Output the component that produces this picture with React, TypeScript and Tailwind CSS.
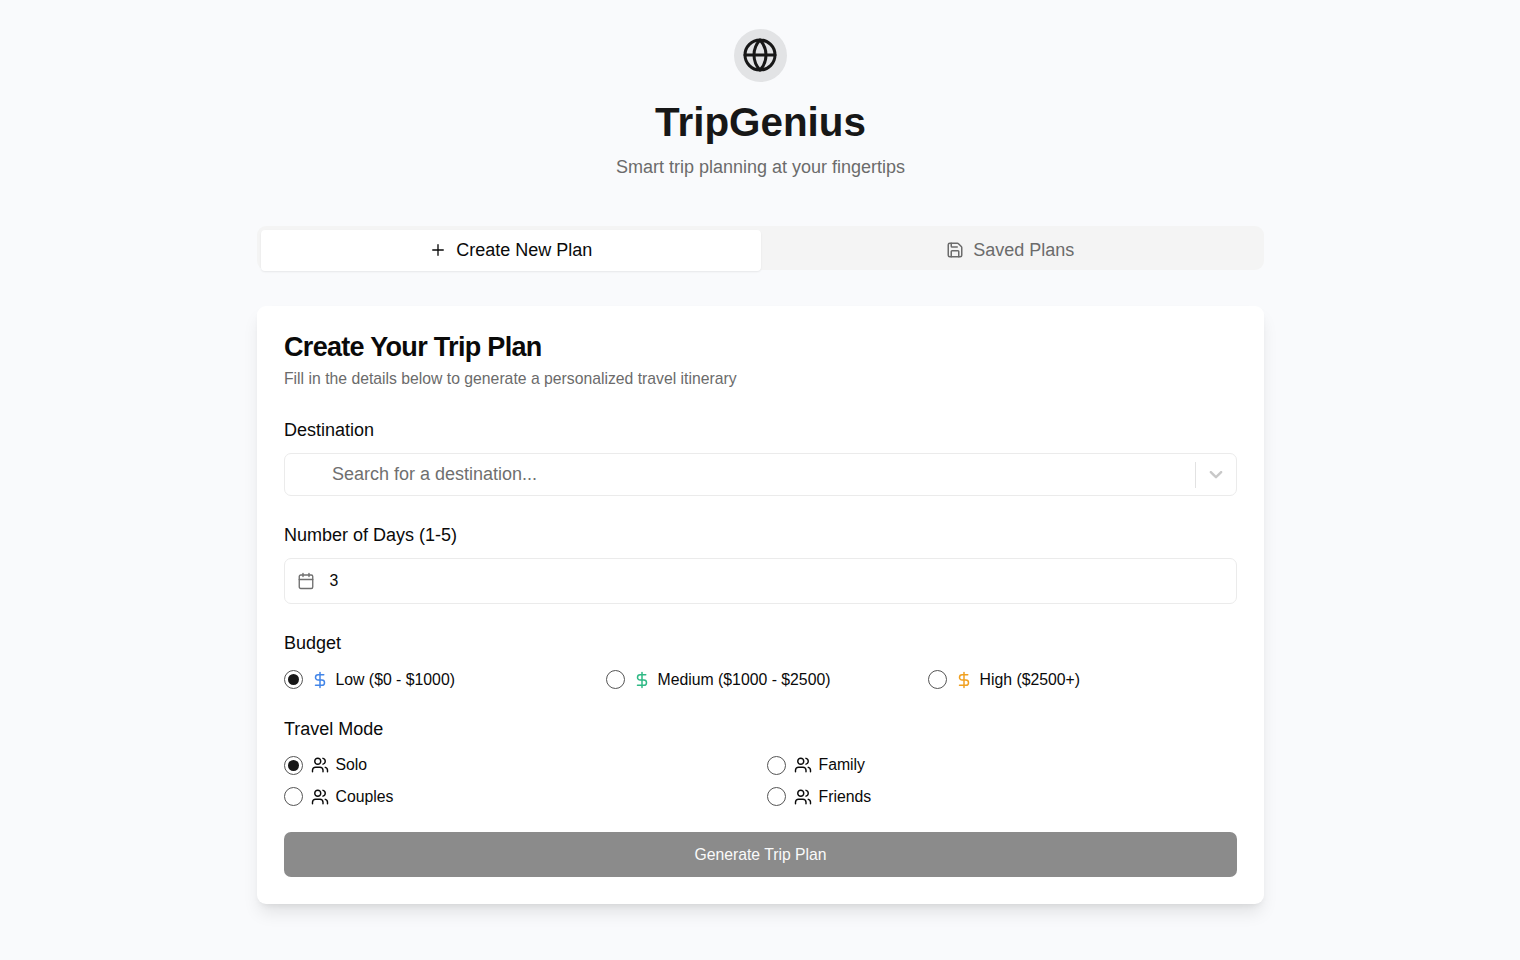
import { Calendar, DollarSign, Globe, Plus, Save, Users } from "lucide-react";

function Radio({ checked }: { checked?: boolean }) {
  return (
    <span className="flex size-[19px] shrink-0 items-center justify-center rounded-full border border-[#555555] bg-white">
      {checked && <span className="size-[11px] rounded-full bg-[#171717]" />}
    </span>
  );
}

const budgets = [
  { label: "Low ($0 - $1000)", color: "text-[#4285e8]", checked: true },
  { label: "Medium ($1000 - $2500)", color: "text-[#2fb985]", checked: false },
  { label: "High ($2500+)", color: "text-[#f0a020]", checked: false },
];

const modes = ["Solo", "Family", "Couples", "Friends"];

export default function App() {
  return (
    <div className="flex h-[960px] w-full flex-col items-center overflow-hidden bg-[#f9fafc] pt-[28.5px] pl-px font-['Liberation_Sans',Arial,sans-serif] text-[#0a0a0a]">
      <header className="flex flex-col items-center">
        <div className="flex size-[53px] items-center justify-center rounded-full bg-[#e2e3e5]">
          <Globe size={36} className="mr-px text-[#171717]" />
        </div>
        <h1 className="mt-[18.5px] text-[40.4px] leading-[45px] font-bold text-[#171717]">TripGenius</h1>
        <p className="mt-[9px] text-[18px] leading-[27px] text-[#6b6b6b]">Smart trip planning at your fingertips</p>
      </header>

      <main className="flex w-[1007px] flex-col">
        <div className="mt-[45px] grid h-[44px] grid-cols-2 rounded-[9px] bg-[#f4f4f4] px-[4px] pt-[4px]">
          <div className="flex h-[41px] items-center justify-center rounded-[4px] bg-white pb-px text-[18px] shadow-[0_1px_2px_rgba(0,0,0,0.08)]">
            <Plus size={18} strokeWidth={1.8} className="mr-[9px]" />
            Create New Plan
          </div>
          <div className="flex h-[40px] items-center justify-center text-[18px] text-[#6b6b6b]">
            <Save size={18} className="mr-[9px]" />
            Saved Plans
          </div>
        </div>

        <section className="mt-[36px] flex h-[598px] flex-col rounded-[9px] bg-white px-[27px] pt-[28px] shadow-[0_11px_17px_-3px_rgba(0,0,0,0.1),0_4px_7px_-4px_rgba(0,0,0,0.1)]">
          <h2 className="text-[27px] leading-[27px] font-bold tracking-[-0.69px]">Create Your Trip Plan</h2>
          <p className="mt-[7px] text-[15.75px] leading-[22px] text-[#6b6b6b]">
            Fill in the details below to generate a personalized travel itinerary
          </p>

          <h3 className="mt-[27px] text-[18px] leading-[27px]">Destination</h3>
          <div className="mt-[9px] flex h-[43px] items-center rounded-[7px] border border-[#ebebeb] pl-[47px] text-[18px] text-[#6f6f6f]">
            <span className="flex-1">Search for a destination...</span>
            <span className="h-[26px] w-px bg-[#e2e2e2]" />
            <span className="flex w-[40px] justify-center pb-px text-[#c8c8c8]">
              <svg width="22" height="22" viewBox="0 0 20 20" fill="currentColor">
                <path d="M4.516 7.548c0.436-0.446 1.043-0.481 1.576 0l3.908 3.747 3.908-3.747c0.533-0.481 1.141-0.446 1.574 0 0.436 0.445 0.408 1.197 0 1.615-0.406 0.418-4.695 4.502-4.695 4.502-0.217 0.223-0.502 0.335-0.787 0.335s-0.57-0.112-0.789-0.335c0 0-4.287-4.084-4.695-4.502s-0.436-1.17 0-1.615z" />
              </svg>
            </span>
          </div>

          <h3 className="mt-[26px] text-[18px] leading-[27px]">Number of Days (1-5)</h3>
          <div className="mt-[9px] flex h-[46px] items-center rounded-[7px] border border-[#ebebeb] pl-[12px] text-[15.8px]">
            <Calendar size={18} strokeWidth={1.8} className="mr-[14.5px] text-[#6f6f6f]" />
            3
          </div>

          <h3 className="mt-[26px] text-[18px] leading-[27px]">Budget</h3>
          <div className="mt-[9px] grid h-[27px] grid-cols-[322px_322px_1fr]">
            {budgets.map((b) => (
              <div key={b.label} className="flex items-center text-[15.8px]">
                <Radio checked={b.checked} />
                <DollarSign size={18} className={`mr-[6.5px] ml-[8px] ${b.color}`} />
                {b.label}
              </div>
            ))}
          </div>

          <h3 className="mt-[23px] text-[18px] leading-[27px]">Travel Mode</h3>
          <div className="mt-[6.5px] grid grid-cols-[483px_1fr]">
            {modes.map((m) => (
              <div key={m} className="flex h-[31.5px] items-center text-[15.8px]">
                <Radio checked={m === "Solo"} />
                <Users size={18} strokeWidth={1.9} className="mr-[6.5px] ml-[8px]" />
                {m}
              </div>
            ))}
          </div>

          <button className="mt-[19.5px] h-[45px] w-full shrink-0 rounded-[7px] bg-[#8b8b8b] text-[15.75px] text-[#fafafa]">
            Generate Trip Plan
          </button>
        </section>
      </main>
    </div>
  );
}
